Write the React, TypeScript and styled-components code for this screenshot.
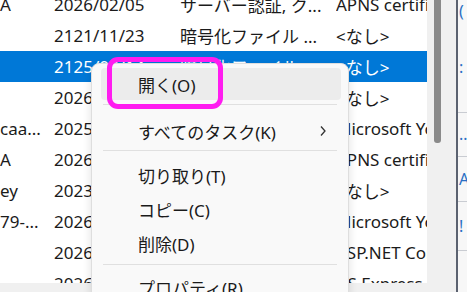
import React, { FC } from 'react';
import styled, { createGlobalStyle } from 'styled-components';

const GlobalStyle = createGlobalStyle`
  body {
    margin: 0;
    overflow: hidden;
    font-family: 'Noto Sans', 'Noto Sans CJK JP', sans-serif;
  }
`;

const Screen = styled.div`
  position: relative;
  width: 467px;
  height: 292px;
  display: flex;
  flex-direction: row;
  background-color: #f0f0f0;
  overflow: hidden;
`;

const ListPane = styled.div`
  width: 456px;
  display: flex;
  flex-direction: column;
`;

const ListBody = styled.div`
  height: 283px;
  display: flex;
  flex-direction: row;
`;

const Rows = styled.div`
  width: 434px;
  background-color: white;
  overflow: hidden;
`;

const RowsInner = styled.div`
  margin-top: -11px;
  display: flex;
  flex-direction: column;
`;

const Row = styled.div<{ $selected?: boolean }>`
  height: 31px;
  display: grid;
  grid-template-columns: 54px 126px 156px 98px;
  align-items: center;
  font-size: 17px;
  color: ${p => (p.$selected ? 'white' : '#1b1b1b')};
  background-color: ${p => (p.$selected ? '#0078d7' : 'transparent')};
`;

const Cell = styled.div`
  white-space: nowrap;
  overflow: hidden;
`;

const VScroll = styled.div`
  width: 22px;
  display: flex;
  flex-direction: row;
  padding-left: 7px;
  background-color: #f0f0f0;
`;

const Thumb = styled.div`
  width: 7px;
  height: 143px;
  border-radius: 0 0 3px 3px;
  background-color: #8a8a8a;
`;

const HScroll = styled.div`
  height: 9px;
  background-color: #f0f0f0;
`;

const WindowEdge = styled.div`
  width: 2px;
  background-color: #5b6270;
`;

const BackWindow = styled.div`
  flex: 1;
  display: flex;
  flex-direction: column;
  background-color: #f7f7f7;
  overflow: hidden;
`;

const BackRow = styled.div<{ $h: number; $line?: boolean }>`
  height: ${p => p.$h}px;
  display: flex;
  align-items: center;
  padding-left: 1px;
  font-size: 16px;
  color: #2a6fc4;
  white-space: nowrap;
  border-bottom: ${p => (p.$line ? '1px solid #c9ccd2' : 'none')};
`;

const Menu = styled.div`
  position: absolute;
  left: 91px;
  top: 63px;
  width: 258px;
  height: 250px;
  box-sizing: border-box;
  padding-top: 4px;
  display: flex;
  flex-direction: column;
  background-color: #f9f9f9;
  border: 1px solid #dedede;
  border-radius: 8px;
  box-shadow: 0 4px 10px rgba(0, 0, 0, 0.12);
`;

const MenuItem = styled.div<{ $h: number; $hover?: boolean }>`
  height: ${p => p.$h}px;
  margin: 0 7px 0 9px;
  padding-left: 37px;
  padding-right: 14px;
  display: flex;
  align-items: center;
  justify-content: space-between;
  border-radius: 4px;
  font-size: 17px;
  color: #1a1a1a;
  background-color: ${p => (p.$hover ? '#ececec' : 'transparent')};
`;

const Separator = styled.div<{ $top: number; $bottom: number }>`
  height: 1px;
  margin: ${p => p.$top}px 11px ${p => p.$bottom}px 11px;
  background-color: #e0e0e0;
`;

const Highlight = styled.div`
  position: absolute;
  left: 107px;
  top: 57px;
  width: 116px;
  height: 52px;
  box-sizing: border-box;
  border: 5px solid #ff1cf0;
  border-radius: 11px;
`;

const Chevron: FC = () => (
  <svg width="8" height="12" viewBox="0 0 8 12">
    <polyline points="2,1.5 6,6 2,10.5" fill="none" stroke="#333" strokeWidth="1.3" />
  </svg>
);

type Cert = { name: string; date: string; purpose: string; friendly: string };

const certs: Cert[] = [
  { name: 'A', date: '2026/02/05', purpose: 'サーバー認証, ク...', friendly: 'APNS certificate' },
  { name: '', date: '2121/11/23', purpose: '暗号化ファイル ...', friendly: '<なし>' },
  { name: '', date: '2125/08/14', purpose: '暗号化ファイル ...', friendly: '<なし>' },
  { name: '', date: '2026/01/12', purpose: 'クライアント認証', friendly: '<なし>' },
  { name: 'caa...', date: '2025/11/30', purpose: 'サーバー認証', friendly: 'Microsoft Your Phone' },
  { name: 'A', date: '2026/03/18', purpose: 'サーバー認証, ク...', friendly: 'APNS certificate' },
  { name: 'ey', date: '2023/07/01', purpose: '<すべて>', friendly: '<なし>' },
  { name: '79-...', date: '2026/05/09', purpose: 'サーバー認証', friendly: 'Microsoft Your Phone' },
  { name: '', date: '2026/09/21', purpose: 'サーバー認証', friendly: 'ASP.NET Core HTTPS' },
  { name: '', date: '2026/10/02', purpose: 'サーバー認証', friendly: 'IIS Express' },
];

export default function App() {
  return (
    <>
      <GlobalStyle />
      <Screen>
        <ListPane>
          <ListBody>
            <Rows>
              <RowsInner>
                {certs.map((c, i) => (
                  <Row key={i} $selected={i === 2}>
                    <Cell>{c.name}</Cell>
                    <Cell>{c.date}</Cell>
                    <Cell>{c.purpose}</Cell>
                    <Cell>{c.friendly}</Cell>
                  </Row>
                ))}
              </RowsInner>
            </Rows>
            <VScroll>
              <Thumb />
            </VScroll>
          </ListBody>
          <HScroll />
        </ListPane>
        <WindowEdge />
        <BackWindow>
          <BackRow $h={22}>(</BackRow>
          <BackRow $h={91} $line>:</BackRow>
          <BackRow $h={44} $line>…</BackRow>
          <BackRow $h={45} $line>A</BackRow>
          <BackRow $h={48} $line>!</BackRow>
          <BackRow $h={42} />
        </BackWindow>

        <Menu>
          <MenuItem $h={32} $hover>開く(O)</MenuItem>
          <Separator $top={4} $bottom={9} />
          <MenuItem $h={34}>
            すべてのタスク(K)
            <Chevron />
          </MenuItem>
          <Separator $top={2} $bottom={7} />
          <MenuItem $h={34}>切り取り(T)</MenuItem>
          <MenuItem $h={34}>コピー(C)</MenuItem>
          <MenuItem $h={34}>削除(D)</MenuItem>
          <Separator $top={4} $bottom={5} />
          <MenuItem $h={34}>プロパティ(R)</MenuItem>
        </Menu>
        <Highlight />
      </Screen>
    </>
  );
}
